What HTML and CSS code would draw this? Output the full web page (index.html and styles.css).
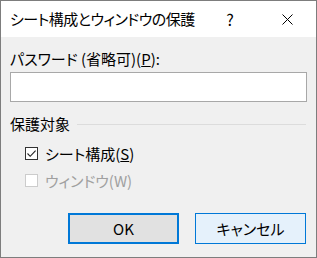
FILE: index.html
```html
<!DOCTYPE html>
<html lang="ja">
<head>
    <meta charset="UTF-8">
    <title>シート構成とウィンドウの保護</title>
    <link rel="stylesheet" href="styles.css">
</head>
<body>
    <div class="dialog">
        <div class="titlebar">
            <div class="title">シート構成とウィンドウの保護</div>
            <div class="title-btn help">?</div>
            <div class="title-btn close">
                <svg width="11" height="11" viewBox="0 0 11 11">
                    <path d="M0.5 0.5 L10.5 10.5 M10.5 0.5 L0.5 10.5" stroke="#000" stroke-width="1" fill="none"/>
                </svg>
            </div>
        </div>
        <div class="content">
            <label class="field-label" for="input-password">パスワード (省略可)(<u>P</u>):</label>
            <input type="password" id="input-password" class="text-input">

            <div class="group-head">
                <span class="group-title">保護対象</span>
                <span class="group-line"></span>
            </div>

            <div class="check-row">
                <span class="check-box">
                    <svg width="11" height="11" viewBox="0 0 11 11">
                        <path d="M1.5 5.5 L4.2 8.3 L9.6 2.6" stroke="#222" stroke-width="1.1" fill="none"/>
                    </svg>
                </span>
                <span class="check-text">シート構成(<u>S</u>)</span>
            </div>
            <div class="check-row disabled">
                <span class="check-box"></span>
                <span class="check-text">ウィンドウ(W)</span>
            </div>

            <div class="buttons">
                <button class="btn btn-default">OK</button>
                <button class="btn btn-hover">キャンセル</button>
            </div>
        </div>
    </div>
</body>
</html>
```

FILE: styles.css
```css
*,
*::after,
*::before{
    padding: 0;
    margin: 0;
    box-sizing: border-box;
}
html{
    font: normal 15px/20px "Noto Sans CJK JP", "Noto Sans", sans-serif;
    font-feature-settings: "palt";
    color: #000;
}
.dialog{
    width: 317px;
    height: 258px;
    border: 1px solid #7d7d7d;
    background-color: #f0f0f0;
    display: flex;
    flex-direction: column;
}
.titlebar{
    height: 36px;
    background-color: #fff;
    display: flex;
    align-items: center;
    padding-right: 6px;
}
.title{
    flex: 1;
    padding-left: 9px;
    white-space: nowrap;
    letter-spacing: -0.5px;
}
.title-btn{
    width: 46px;
    height: 36px;
    display: flex;
    align-items: center;
    justify-content: center;
}
.help{
    font-size: 16px;
    margin-right: 11px;
}
.close{
    padding-top: 1px;
}
.content{
    flex: 1;
    padding: 12px 9px 0 9px;
    display: flex;
    flex-direction: column;
}
.field-label{
    display: block;
    height: 20px;
    margin-bottom: 3px;
}
.text-input{
    width: 100%;
    height: 30px;
    border: 1px solid #a8a8a8;
    background-color: #fff;
    outline: none;
}
.group-head{
    display: flex;
    align-items: center;
    margin-top: 12px;
    height: 20px;
}
.group-title{
    margin-right: 7px;
}
.group-line{
    flex: 1;
    height: 1px;
    background-color: #dcdcdc;
    margin-right: 1px;
}
.check-row{
    display: flex;
    align-items: center;
    height: 13px;
    margin-left: 15px;
    margin-top: 13px;
}
.check-row + .check-row{
    margin-top: 14px;
}
.check-box{
    width: 13px;
    height: 13px;
    border: 1px solid #333;
    background-color: #fff;
    display: flex;
    align-items: center;
    justify-content: center;
    margin-right: 7px;
}
.check-text{
    line-height: 20px;
    white-space: nowrap;
}
.disabled .check-box{
    border-color: #cccccc;
}
.disabled .check-text{
    color: #a0a0a0;
}
.buttons{
    display: flex;
    justify-content: flex-end;
    gap: 16px;
    margin-top: 26px;
    padding-right: 1px;
}
.btn{
    font: inherit;
    width: 111px;
    height: 31px;
    color: #000;
    cursor: pointer;
}
.btn-default{
    background-color: #e1e1e1;
    border: 2px solid #0078d7;
}
.btn-hover{
    background-color: #e5f1fb;
    border: 1px solid #0078d7;
}
```
